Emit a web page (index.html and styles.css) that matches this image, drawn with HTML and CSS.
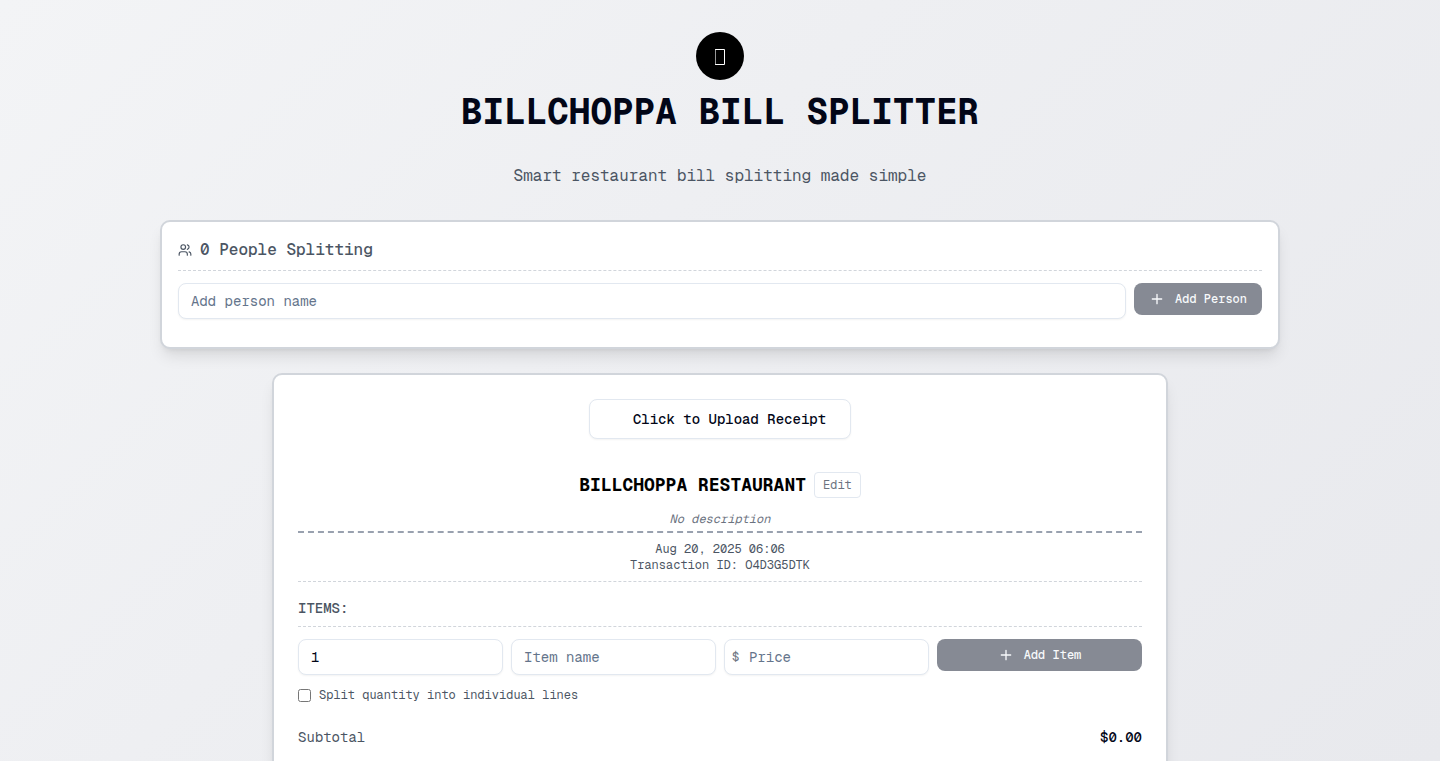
FILE: index.html
```html
<!DOCTYPE html>
<html lang="en">
<head>
<meta charset="utf-8">
<meta name="viewport" content="width=device-width, initial-scale=1">
<title>BillChoppa Bill Splitter</title>
<link rel="stylesheet" href="styles.css">
</head>
<body>
<div class="page">
  <header class="header">
    <div class="logo"><svg class="logo-mark" viewBox="0 0 10 18" aria-hidden="true"><path d="M.5 2.5h9v15h-9z"/></svg></div>
    <h1 class="title">BILLCHOPPA BILL SPLITTER</h1>
    <p class="tagline">Smart restaurant bill splitting made simple</p>
  </header>
  <main class="main">
    <section class="card people">
      <h2 class="people-heading">
        <svg class="icon-users" viewBox="0 0 24 24" aria-hidden="true"><path d="M16 21v-2a4 4 0 0 0-4-4H6a4 4 0 0 0-4 4v2"/><circle cx="9" cy="7" r="4"/><path d="M22 21v-2a4 4 0 0 0-3-3.87"/><path d="M16 3.13a4 4 0 0 1 0 7.75"/></svg>
        0 People Splitting
      </h2>
      <form class="people-form">
        <input class="field" type="text" placeholder="Add person name" aria-label="Person name">
        <button class="button-dark" type="button" disabled>
          <svg class="icon-plus" viewBox="0 0 24 24" aria-hidden="true"><path d="M5 12h14M12 5v14"/></svg>
          Add Person
        </button>
      </form>
    </section>
    <section class="card receipt">
      <button class="upload" type="button">Click to Upload Receipt</button>
      <div class="restaurant">
        <h2 class="restaurant-name">BILLCHOPPA RESTAURANT</h2>
        <button class="edit" type="button">Edit</button>
      </div>
      <p class="description">No description</p>
      <div class="meta">
        <p>Aug 20, 2025 06:06</p>
        <p>Transaction ID: O4D3G5DTK</p>
      </div>
      <h3 class="items-heading">ITEMS:</h3>
      <form class="item-form">
        <input class="field" type="text" inputmode="numeric" value="1" aria-label="Quantity">
        <input class="field" type="text" placeholder="Item name" aria-label="Item name">
        <div class="price">
          <span class="currency">$</span>
          <input class="field field-price" type="text" placeholder="Price" aria-label="Price">
        </div>
        <button class="button-dark" type="button" disabled>
          <svg class="icon-plus" viewBox="0 0 24 24" aria-hidden="true"><path d="M5 12h14M12 5v14"/></svg>
          Add Item
        </button>
      </form>
      <label class="split"><input class="split-box" type="checkbox">Split quantity into individual lines</label>
      <div class="subtotal"><span>Subtotal</span><strong class="amount">$0.00</strong></div>
    </section>
  </main>
</div>
</body>
</html>
```
FILE: styles.css
```css
*, *::before, *::after { box-sizing: border-box; }
body, h1, h2, h3, p { margin: 0; }
body, input, button { font-family: "Geist Mono", "DejaVu Sans Mono", "Liberation Mono", monospace; }
.page {
  height: 100vh;
  overflow: hidden;
  padding: 32px 16px 0;
  background: linear-gradient(135deg, #f3f4f6 0%, #eeeff2 40%, #e8e9ed 100%);
  color: #020617;
}
.header { text-align: center; }
.logo {
  display: flex;
  align-items: center;
  justify-content: center;
  width: 48px;
  height: 48px;
  margin: 0 auto 12px;
  border-radius: 50%;
  background: #000;
  color: #fff;
}
.title { font-size: 36px; line-height: 40px; font-weight: 700; }
.tagline { margin-top: 32px; font-size: 16px; line-height: 24px; color: #4b5563; }
.main { max-width: 1120px; margin: 32px auto 0; }
.card {
  border: 2px solid #d1d5db;
  border-radius: 10px;
  background: #fff;
  box-shadow: 0 10px 15px -3px rgba(0, 0, 0, 0.1), 0 4px 6px -4px rgba(0, 0, 0, 0.1);
}
.people { padding: 16px 16px 28px; }
.people-heading {
  display: flex;
  align-items: center;
  gap: 8px;
  padding-bottom: 8px;
  border-bottom: 1px dashed #d1d5db;
  font-size: 16px;
  line-height: 24px;
  font-weight: 500;
  color: #4b5563;
}
svg { fill: none; stroke: currentColor; stroke-width: 2; stroke-linecap: round; stroke-linejoin: round; }
.logo-mark { width: 10px; height: 18px; margin-right: 0; stroke-width: 1; stroke-linejoin: miter; }
.icon-users { width: 14px; height: 14px; }
.icon-plus { width: 16px; height: 16px; }
.people-form { display: flex; align-items: flex-start; gap: 8px; margin-top: 12px; }
.field {
  width: 100%;
  min-width: 0;
  height: 36px;
  padding: 0 12px;
  border: 1px solid #e2e8f0;
  border-radius: 8px;
  background: #fff;
  box-shadow: 0 1px 2px rgba(0, 0, 0, 0.05);
  color: #020617;
  font-size: 14px;
}
.field::placeholder { color: #64748b; opacity: 1; }
.button-dark {
  display: flex;
  flex-shrink: 0;
  align-items: center;
  justify-content: center;
  gap: 10px;
  height: 32px;
  padding: 0 15px;
  border: 0;
  border-radius: 8px;
  background: #868a94;
  color: #f8fafc;
  font-size: 12px;
  font-weight: 500;
}
.receipt {
  max-width: 896px;
  margin: 24px auto 0;
  padding: 24px 24px 48px;
}
.upload {
  display: block;
  height: 40px;
  margin: 0 auto;
  padding: 0 24px 0 43px;
  border: 1px solid #e2e8f0;
  border-radius: 8px;
  background: #fff;
  box-shadow: 0 1px 2px rgba(0, 0, 0, 0.05);
  color: #020617;
  font-size: 14px;
  font-weight: 500;
}
.restaurant { display: flex; align-items: center; justify-content: center; gap: 8px; margin-top: 32px; }
.restaurant-name { font-size: 18px; line-height: 28px; font-weight: 700; color: #000; }
.edit {
  height: 26px;
  padding: 0 8px;
  border: 1px solid #e2e8f0;
  border-radius: 4px;
  background: #fff;
  color: #6b7280;
  font-size: 12px;
}
.description {
  margin-top: 12px;
  padding-bottom: 4px;
  border-bottom: 2px dashed #99a1af;
  color: #6b7280;
  font-size: 12px;
  line-height: 16px;
  font-style: italic;
  text-align: center;
}
.meta {
  padding: 8px 0;
  border-bottom: 1px dashed #d1d5db;
  color: #4b5563;
  font-size: 12px;
  line-height: 16px;
  text-align: center;
}
.items-heading {
  margin-top: 16px;
  padding-bottom: 8px;
  border-bottom: 1px dashed #d1d5db;
  color: #4b5563;
  font-size: 14px;
  line-height: 20px;
  font-weight: 500;
}
.item-form {
  display: grid;
  grid-template-columns: repeat(4, minmax(0, 1fr));
  align-items: start;
  gap: 8px;
  margin-top: 12px;
}
.price { position: relative; }
.currency {
  position: absolute;
  left: 8px;
  top: 10px;
  color: #6b7280;
  font-size: 12px;
  line-height: 16px;
}
.field-price { padding-left: 24px; }
.split {
  display: flex;
  align-items: center;
  gap: 8px;
  margin-top: 12px;
  color: #4b5563;
  font-size: 12px;
  line-height: 16px;
}
.split-box { width: 13px; height: 13px; margin: 0; }
.subtotal {
  display: flex;
  justify-content: space-between;
  margin-top: 24px;
  color: #4b5563;
  font-size: 14px;
  line-height: 20px;
}
.amount { color: #020617; font-weight: 500; }
```
